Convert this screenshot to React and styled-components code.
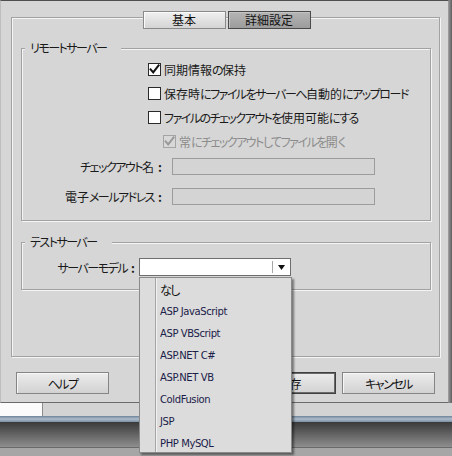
import React from "react";
import styled, { createGlobalStyle } from "styled-components";

const GlobalStyle = createGlobalStyle`
  html, body {
    margin: 0;
    padding: 0;
  }
  body {
    background: #8a8a8a;
    font-family: "Noto Sans CJK JP", sans-serif;
    color: #1a1a1a;
  }
`;

const SERVER_MODELS = [
  "なし",
  "ASP JavaScript",
  "ASP VBScript",
  "ASP.NET C#",
  "ASP.NET VB",
  "ColdFusion",
  "JSP",
  "PHP MySQL",
];

// kana in the old UI font is proportional and much narrower than kanji
const KANA = /([\u3040-\u30ff]+)/;

function Jp({ children }) {
  return String(children)
    .split(KANA)
    .map((part, i) => (i % 2 ? <Kana key={i}>{part}</Kana> : part));
}

function Checkbox({ checked, disabled }) {
  const line = disabled ? "#a4a4a4" : "#2a2a2a";
  const mark = disabled ? "#9a9a9a" : "#111";
  return (
    <CheckBoxSvg width="13" height="13" viewBox="0 0 13 13">
      <rect x="0.5" y="0.5" width="12" height="12" fill={disabled ? "#d8d8d8" : "#fff"} stroke={line} />
      {checked && (
        <path d="M2.6 6.4 L5.2 9.4 L10.6 2.4" fill="none" stroke={mark} strokeWidth="2" strokeLinecap="square" />
      )}
    </CheckBoxSvg>
  );
}

function CheckOption({ checked, disabled, indent, children }) {
  return (
    <CheckRow $indent={indent} $disabled={disabled}>
      <Checkbox checked={checked} disabled={disabled} />
      <RowText>
        <Jp>{children}</Jp>
      </RowText>
    </CheckRow>
  );
}

export default function App() {
  return (
    <>
      <GlobalStyle />
      <Screen>
        <Top>
          <Dialog>
            <TabPanel>
              <TabBar>
                <Tab>基本</Tab>
                <Tab $active>詳細設定</Tab>
              </TabBar>

              <Group $height={173}>
                <Legend><Jp>リモートサーバー</Jp></Legend>
                <CheckList>
                  <CheckOption checked>同期情報の保持</CheckOption>
                  <CheckOption>保存時にファイルをサーバーへ自動的にアップロード</CheckOption>
                  <CheckOption>ファイルのチェックアウトを使用可能にする</CheckOption>
                  <CheckOption checked disabled indent>
                    常にチェックアウトしてファイルを開く
                  </CheckOption>
                </CheckList>
                <Fields>
                  <FieldRow>
                    <FieldLabel><Jp>チェックアウト名</Jp><Colon>:</Colon></FieldLabel>
                    <TextInput disabled />
                  </FieldRow>
                  <FieldRow>
                    <FieldLabel><Jp>電子メールアドレス</Jp><Colon>:</Colon></FieldLabel>
                    <TextInput disabled />
                  </FieldRow>
                </Fields>
              </Group>

              <Group $height={48} $gap={21}>
                <Legend><Jp>テストサーバー</Jp></Legend>
                <SelectRow>
                  <SelectLabel><Jp>サーバーモデル</Jp><Colon>:</Colon></SelectLabel>
                  <Select>
                    <SelectValue />
                    <SelectArrow>
                      <svg width="7" height="5" viewBox="0 0 7 5">
                        <path d="M0 0 H7 L3.5 5 Z" fill="#111" />
                      </svg>
                    </SelectArrow>
                  </Select>
                </SelectRow>
              </Group>
            </TabPanel>

            <ButtonRow>
              <Button><span><Jp>ヘルプ</Jp></span></Button>
              <Spacer />
              <Button $primary>保存</Button>
              <Button><span><Jp>キャンセル</Jp></span></Button>
            </ButtonRow>
          </Dialog>
          <SideStrip />
        </Top>

        <Backdrop>
          <DocRow>
            <DocWhite />
            <DocGray />
          </DocRow>
          <BlueBar />
          <DarkBar />
          <StatusBar />
        </Backdrop>

        <Menu>
          {SERVER_MODELS.map((name, i) => (
            <MenuItem key={name} $jp={i === 0}>
              <span>{i === 0 ? <Jp>{name}</Jp> : name}</span>
            </MenuItem>
          ))}
        </Menu>
      </Screen>
    </>
  );
}

const Screen = styled.div`
  position: relative;
  width: 452px;
  height: 456px;
  overflow: hidden;
  background: #a8a8a8;
  font-size: 12px;
  font-feature-settings: "palt" 1;
`;

const Kana = styled.span`
  letter-spacing: -1.5px;
`;

const Colon = styled.span`
  display: inline-block;
  width: 12px;
  text-align: center;
  font-weight: bold;
`;

const Top = styled.div`
  display: flex;
  height: 403px;
`;

const Dialog = styled.div`
  box-sizing: border-box;
  width: 449px;
  height: 403px;
  display: flex;
  flex-direction: column;
  padding: 16px 8px 0 10px;
  background: #d6d6d6;
  border-top: 1px solid #4e4e4e;
  border-left: 1px solid #bdbdbd;
  border-right: 1px solid #9a9a9a;
  border-bottom: 1px solid #6a6a6a;
`;

const SideStrip = styled.div`
  flex: 1;
  background: linear-gradient(to right, #8e8e8e, #5e5e5e);
`;

const etched = `
  border: 1px solid #a2a2a2;
  box-shadow: inset 1px 1px 0 #f4f4f4, 1px 1px 0 #f4f4f4;
`;

const TabPanel = styled.div`
  box-sizing: border-box;
  width: 429px;
  height: 340px;
  ${etched}
`;

const TabBar = styled.div`
  display: flex;
  justify-content: center;
  gap: 2px;
  margin-top: -7px;
  padding-left: 2px;
`;

const Tab = styled.div`
  box-sizing: border-box;
  width: 83px;
  height: 18px;
  display: flex;
  align-items: center;
  justify-content: center;
  font-size: 12px;
  line-height: 1;
  color: #111;
  border: 1px solid ${(p) => (p.$active ? "#4a4a4a" : "#8a8a8a")};
  background: ${(p) =>
    p.$active
      ? "linear-gradient(#b4b4b4, #9c9c9c)"
      : "linear-gradient(#f0f0f0, #d4d4d4)"};
  box-shadow: inset 1px 1px 0 ${(p) => (p.$active ? "#c4c4c4" : "#fafafa")};
`;

const Group = styled.div`
  box-sizing: border-box;
  width: 410px;
  height: ${(p) => p.$height}px;
  margin: ${(p) => p.$gap || 19}px 0 0 9px;
  ${etched}
`;

const Legend = styled.div`
  width: fit-content;
  height: 14px;
  line-height: 14px;
  margin: -8px 0 0 3px;
  padding: 0 15px 0 5px;
  background: #d6d6d6;
  font-size: 12px;
  color: #1a1a1a;
`;

const CheckList = styled.div`
  display: flex;
  flex-direction: column;
  padding: 2px 0 0 126px;
`;

const CheckBoxSvg = styled.svg`
  flex: none;
  display: block;
`;

const CheckRow = styled.div`
  height: 24px;
  display: flex;
  align-items: center;
  gap: 3px;
  padding-left: ${(p) => (p.$indent ? 15 : 0)}px;
  color: ${(p) => (p.$disabled ? "#8c8c8c" : "#1a1a1a")};
`;

const RowText = styled.span`
  white-space: nowrap;
`;

const Fields = styled.div`
  display: flex;
  flex-direction: column;
  gap: 10px;
  margin-top: 3px;
`;

const FieldRow = styled.div`
  height: 20px;
  display: flex;
  align-items: center;
  gap: 6px;
`;

const FieldLabel = styled.div`
  width: 144px;
  text-align: right;
  white-space: nowrap;
`;

const TextInput = styled.input`
  box-sizing: border-box;
  width: 203px;
  height: 17px;
  margin: 0;
  padding: 0;
  border: 1px solid #9c9c9c;
  background: #d4d4d4;
`;

const SelectRow = styled.div`
  display: flex;
  align-items: center;
  height: 18px;
  margin-top: 9px;
`;

const SelectLabel = styled.div`
  width: 117px;
  text-align: right;
  white-space: nowrap;
`;

const Select = styled.div`
  box-sizing: border-box;
  width: 152px;
  height: 18px;
  display: flex;
  background: #fff;
  border: 1px solid #6e6e6e;
`;

const SelectValue = styled.div`
  flex: 1;
`;

const SelectArrow = styled.div`
  width: 17px;
  margin: 2px 0;
  display: flex;
  align-items: center;
  justify-content: center;
  border-left: 1px solid #a8a8a8;
`;

const ButtonRow = styled.div`
  display: flex;
  gap: 6px;
  margin: 15px 5px 0 5px;
`;

const Spacer = styled.div`
  flex: 1;
`;

const Button = styled.div`
  box-sizing: border-box;
  width: 93px;
  height: 22px;
  display: flex;
  align-items: center;
  justify-content: center;
  font-size: 12px;
  color: #111;
  white-space: nowrap;
  border: 1px solid ${(p) => (p.$primary ? "#404040" : "#858585")};
  box-shadow: ${(p) =>
    p.$primary ? "inset 0 0 0 1px #6a6a6a" : "inset 1px 1px 0 #f6f6f6"};
  background: linear-gradient(#ececec, #d2d2d2);
`;

const Backdrop = styled.div`
  display: flex;
  flex-direction: column;
`;

const DocRow = styled.div`
  display: flex;
  height: 13px;
`;

const DocWhite = styled.div`
  width: 42px;
  background: #fbfbfb;
`;

const DocGray = styled.div`
  flex: 1;
  background: #d3d3d3;
  border-left: 1px solid #8c8c8c;
`;

const BlueBar = styled.div`
  height: 6px;
  background: linear-gradient(#6e8398, #aebccb 50%, #7a8fa3);
`;

const DarkBar = styled.div`
  height: 25px;
  background: linear-gradient(#3a3a3a, #8e8e8e);
`;

const StatusBar = styled.div`
  height: 9px;
  background: #a6a6a6;
  border-top: 1px solid #6a6a6a;
`;

const Menu = styled.div`
  position: absolute;
  left: 139px;
  top: 277px;
  box-sizing: border-box;
  width: 153px;
  height: 176px;
  border: 1px solid #8a8a8a;
  background:
    linear-gradient(
      to right,
      transparent 15px,
      #a4a4a4 15px,
      #a4a4a4 16px,
      #f2f2f2 16px,
      #f2f2f2 17px,
      transparent 17px
    ),
    #dcdcdc;
  box-shadow: 2px 2px 2px rgba(0, 0, 0, 0.45);
`;

const MenuItem = styled.div`
  height: 22px;
  display: flex;
  align-items: center;
  padding-left: 20px;
  white-space: nowrap;
  font-family: ${(p) =>
    p.$jp ? '"Noto Sans CJK JP", sans-serif' : '"DejaVu Sans", Verdana, sans-serif'};
  font-size: ${(p) => (p.$jp ? 12 : 10)}px;
  color: ${(p) => (p.$jp ? "#111" : "#1a2048")};
  letter-spacing: ${(p) => (p.$jp ? 0 : -0.4)}px;
`;
